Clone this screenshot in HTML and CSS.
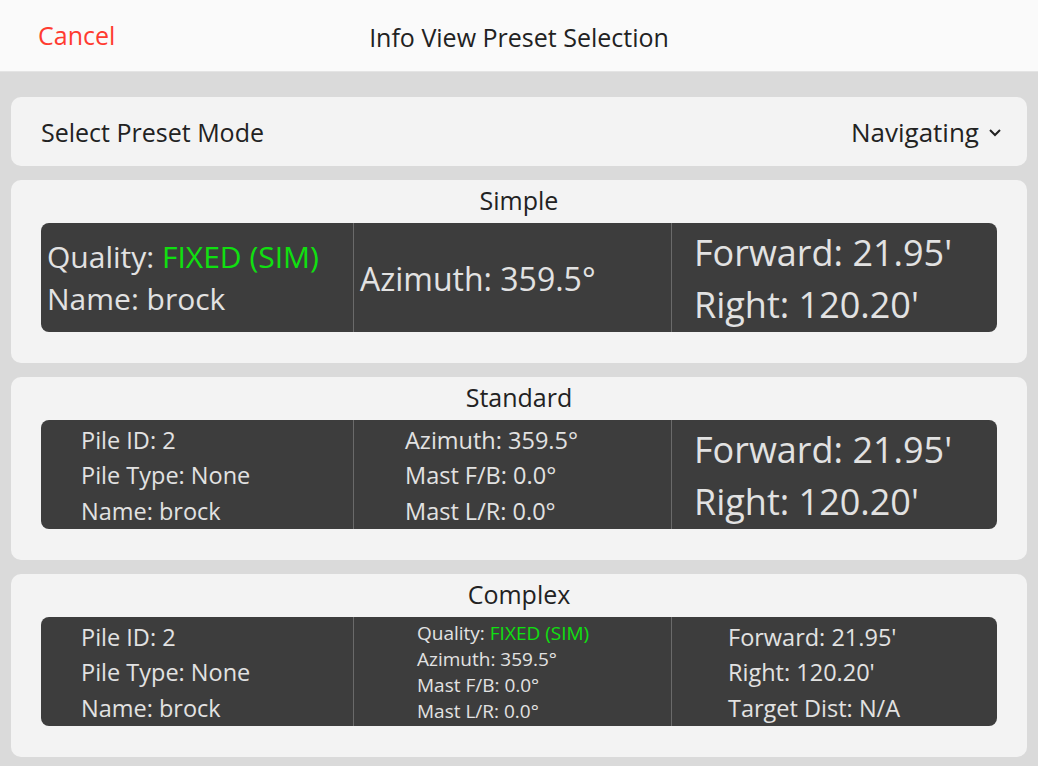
FILE: index.html
```html
<!DOCTYPE html>
<html lang="en">
<head>
    <meta charset="UTF-8">
    <title>Info View Preset Selection</title>
    <link rel="stylesheet" href="styles.css">
</head>
<body>
    <div class="header">
        <span class="cancel">Cancel</span>
        <span class="title">Info View Preset Selection</span>
    </div>

    <div class="content">
        <div class="card mode-card">
            <span>Select Preset Mode</span>
            <span class="select">Navigating
                <svg width="14" height="10" viewBox="0 0 14 10"><path d="M2 3 L7 8 L12 3" fill="none" stroke="#222" stroke-width="2"/></svg>
            </span>
        </div>

        <!-- Simple -->
        <div class="card preset">
            <div class="preset-title">Simple</div>
            <div class="info">
                <div class="col simple-left">
                    <div>Quality: <span class="green">FIXED (SIM)</span></div>
                    <div>Name: brock</div>
                </div>
                <div class="col simple-mid">
                    <div>Azimuth: 359.5°</div>
                </div>
                <div class="col big">
                    <div>Forward: 21.95'</div>
                    <div>Right: 120.20'</div>
                </div>
            </div>
        </div>

        <!-- Standard -->
        <div class="card preset">
            <div class="preset-title">Standard</div>
            <div class="info">
                <div class="col std pad-left">
                    <div>Pile ID: 2</div>
                    <div>Pile Type: None</div>
                    <div>Name: brock</div>
                </div>
                <div class="col std pad-mid">
                    <div>Azimuth: 359.5°</div>
                    <div>Mast F/B: 0.0°</div>
                    <div>Mast L/R: 0.0°</div>
                </div>
                <div class="col big">
                    <div>Forward: 21.95'</div>
                    <div>Right: 120.20'</div>
                </div>
            </div>
        </div>

        <!-- Complex -->
        <div class="card preset">
            <div class="preset-title">Complex</div>
            <div class="info">
                <div class="col std pad-left">
                    <div>Pile ID: 2</div>
                    <div>Pile Type: None</div>
                    <div>Name: brock</div>
                </div>
                <div class="col small">
                    <div>Quality: <span class="green">FIXED (SIM)</span></div>
                    <div>Azimuth: 359.5°</div>
                    <div>Mast F/B: 0.0°</div>
                    <div>Mast L/R: 0.0°</div>
                </div>
                <div class="col std pad-right">
                    <div>Forward: 21.95'</div>
                    <div>Right: 120.20'</div>
                    <div>Target Dist: N/A</div>
                </div>
            </div>
        </div>
    </div>
</body>
</html>
```

FILE: styles.css
```css
body {
    margin: 0;
    height: 100vh;
    background: #dadada;
    font-family: 'Open Sans', 'Noto Sans', sans-serif;
    color: #222;
    overflow: hidden;
}

.header {
    position: relative;
    height: 71px;
    background: #fafafa;
    border-bottom: 1px solid #e4e4e4;
    display: flex;
    align-items: center;
    justify-content: center;
    font-size: 25px;
}

.cancel {
    position: absolute;
    left: 38px;
    top: 18px;
    color: #ff3b30;
}

.title {
    color: #222;
    margin-top: 2px;
}

.content {
    display: flex;
    flex-direction: column;
    gap: 14px;
    padding: 25px 11px 0 11px;
}

.card {
    background: #f3f3f3;
    border-radius: 10px;
}

.mode-card {
    height: 69px;
    display: flex;
    align-items: center;
    justify-content: space-between;
    padding: 0 25px 0 30px;
    font-size: 25px;
}

.select {
    display: flex;
    align-items: center;
    gap: 9px;
    font-size: 26px;
}

.preset {
    height: 183px;
    box-sizing: border-box;
    padding: 0 30px;
}

.preset-title {
    text-align: center;
    font-size: 25px;
    height: 43px;
    line-height: 41px;
}

.info {
    background: #3d3d3d;
    border-radius: 8px;
    height: 109px;
    display: grid;
    grid-template-columns: 312px 318px 1fr;
    color: #e2e2e2;
}

.col {
    display: flex;
    flex-direction: column;
    justify-content: center;
    border-left: 1px solid #6a6a6a;
    white-space: nowrap;
    overflow: hidden;
}

.col:first-child {
    border-left: none;
}

.green {
    color: #10e010;
}

.simple-left {
    font-size: 30px;
    line-height: 42px;
    padding-left: 6px;
}

.simple-mid {
    font-size: 32px;
    padding-left: 6px;
    padding-top: 2px;
}

.big {
    font-size: 36px;
    line-height: 52px;
    padding-left: 22px;
    padding-top: 3px;
}

.std {
    font-size: 23.5px;
    line-height: 35.5px;
    padding-top: 3px;
}

.pad-left {
    padding-left: 40px;
}

.pad-mid {
    padding-left: 51px;
}

.pad-right {
    padding-left: 56px;
}

.small {
    font-size: 19px;
    line-height: 26px;
    padding-left: 63px;
}
```
